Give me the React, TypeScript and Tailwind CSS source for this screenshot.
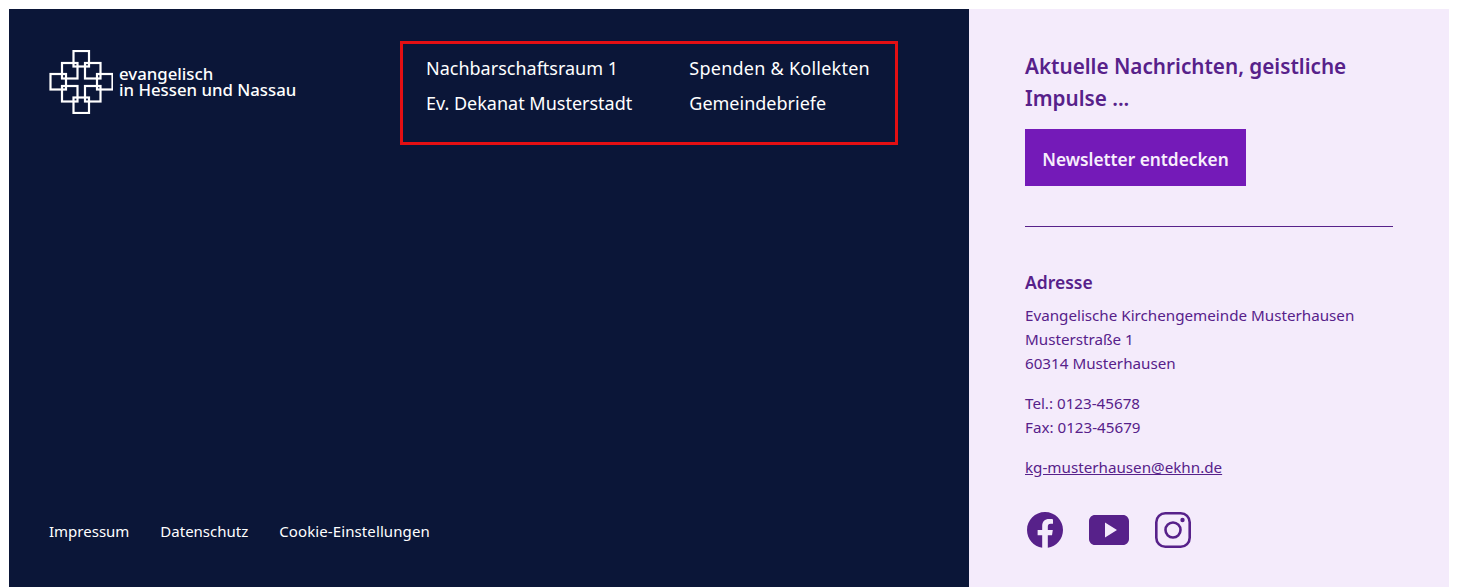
import React from 'react';

const LOGO_SQUARES = [
  [72.5, 50],
  [61, 62],
  [84, 62],
  [49.5, 73],
  [96, 73],
  [61, 85],
  [84, 85],
  [72.5, 96.5],
];

const Logo = () => (
  <div className="flex items-center gap-[6px]">
    <svg width="64" height="64" viewBox="49 50 64 64" fill="none" stroke="#ffffff" strokeWidth="2.2" className="shrink-0">
      {LOGO_SQUARES.map(([x, y]) => (
        <rect key={`${x}-${y}`} x={x + 1} y={y + 1} width="15.5" height="15.5" />
      ))}
    </svg>
    <div className="text-[16.8px] leading-[16px] font-medium text-white">
      <p>evangelisch</p>
      <p>in Hessen und Nassau</p>
    </div>
  </div>
);

const FacebookIcon = () => (
  <svg width="36" height="36" viewBox="0 0 36 36">
    <path
      fill="#57218a"
      d="M36 18C36 8.06 27.94 0 18 0S0 8.06 0 18c0 8.98 6.58 16.43 15.19 17.78V23.2h-4.57V18h4.57v-3.96c0-4.51 2.69-7 6.8-7 1.97 0 4.03.35 4.03.35v4.43h-2.27c-2.24 0-2.94 1.39-2.94 2.81V18h4.99l-.8 5.2h-4.19v12.58C29.42 34.43 36 26.98 36 18z"
    />
  </svg>
);

const YoutubeIcon = () => (
  <svg width="40" height="30" viewBox="0 0 40 30">
    <path
      fill="#57218a"
      fillRule="evenodd"
      d="M6 0h28c3.300 0 6 2.700 6 6v18c0 3.300-2.700 6-6 6H6c-3.300 0-6-2.700-6-6V6c0-3.300 2.700-6 6-6zm10 7.500v15l12-7.500z"
    />
  </svg>
);

const InstagramIcon = () => (
  <svg width="36" height="36" viewBox="0 0 36 36" fill="none" stroke="#57218a" strokeWidth="2.6">
    <rect x="1.300" y="1.300" width="33.400" height="33.400" rx="9" />
    <circle cx="18" cy="18" r="7.500" />
    <circle cx="27.500" cy="8" r="2.200" fill="#57218a" stroke="none" />
  </svg>
);

export default function App() {
  return (
    <div className="h-[587px] overflow-hidden bg-white p-[9px] pb-0 font-['Noto_Sans','Open_Sans',sans-serif]">
      <div className="flex h-full">
        <div className="flex w-[960px] flex-col justify-between bg-[#0b1638] pt-[32px] pb-[44px] pl-[40px] text-white">
          <div className="flex items-start">
            <div className="mt-[9px] w-[351px]">
              <Logo />
            </div>
            <div className="flex h-[104px] w-[498px] gap-[57px] border-[3px] border-[#e30f13] pt-[7px] pl-[23px] text-[18px] leading-[35px]">
              <ul>
                <li>Nachbarschaftsraum 1</li>
                <li>Ev. Dekanat Musterstadt</li>
              </ul>
              <ul>
                <li className="tracking-[0.25px]">Spenden &amp; Kollekten</li>
                <li>Gemeindebriefe</li>
              </ul>
            </div>
          </div>
          <div className="flex gap-[31px] text-[15px] leading-[24px]">
            <span>Impressum</span>
            <span>Datenschutz</span>
            <span className="tracking-[0.1px]">Cookie-Einstellungen</span>
          </div>
        </div>

        <div className="w-[480px] bg-[#f4ebfb] pt-[41px] pr-[56px] pl-[56px] text-[#57218a]">
          <h2 className="text-[20.7px] leading-[32px] font-semibold">Aktuelle Nachrichten, geistliche Impulse ...</h2>
          <button className="mt-[15px] block h-[57px] w-[221px] bg-[#741ab8] pt-[4px] text-[17.3px] font-semibold text-[#f7eefc]">
            Newsletter entdecken
          </button>
          <div className="mt-[40px] border-t border-[#57218a]" />
          <h3 className="mt-[42px] text-[17.5px] leading-[26px] font-semibold">Adresse</h3>
          <div className="mt-[8px] text-[15.2px] leading-[24px]">
            <p>Evangelische Kirchengemeinde Musterhausen</p>
            <p>Musterstraße 1</p>
            <p>60314 Musterhausen</p>
            <p className="mt-[16px]">Tel.: 0123-45678</p>
            <p>Fax: 0123-45679</p>
            <p className="mt-[16px] underline">kg-musterhausen@ekhn.de</p>
          </div>
          <div className="mt-[33px] flex items-center gap-[26px] pl-[2px]">
            <FacebookIcon />
            <YoutubeIcon />
            <InstagramIcon />
          </div>
        </div>
      </div>
    </div>
  );
}
